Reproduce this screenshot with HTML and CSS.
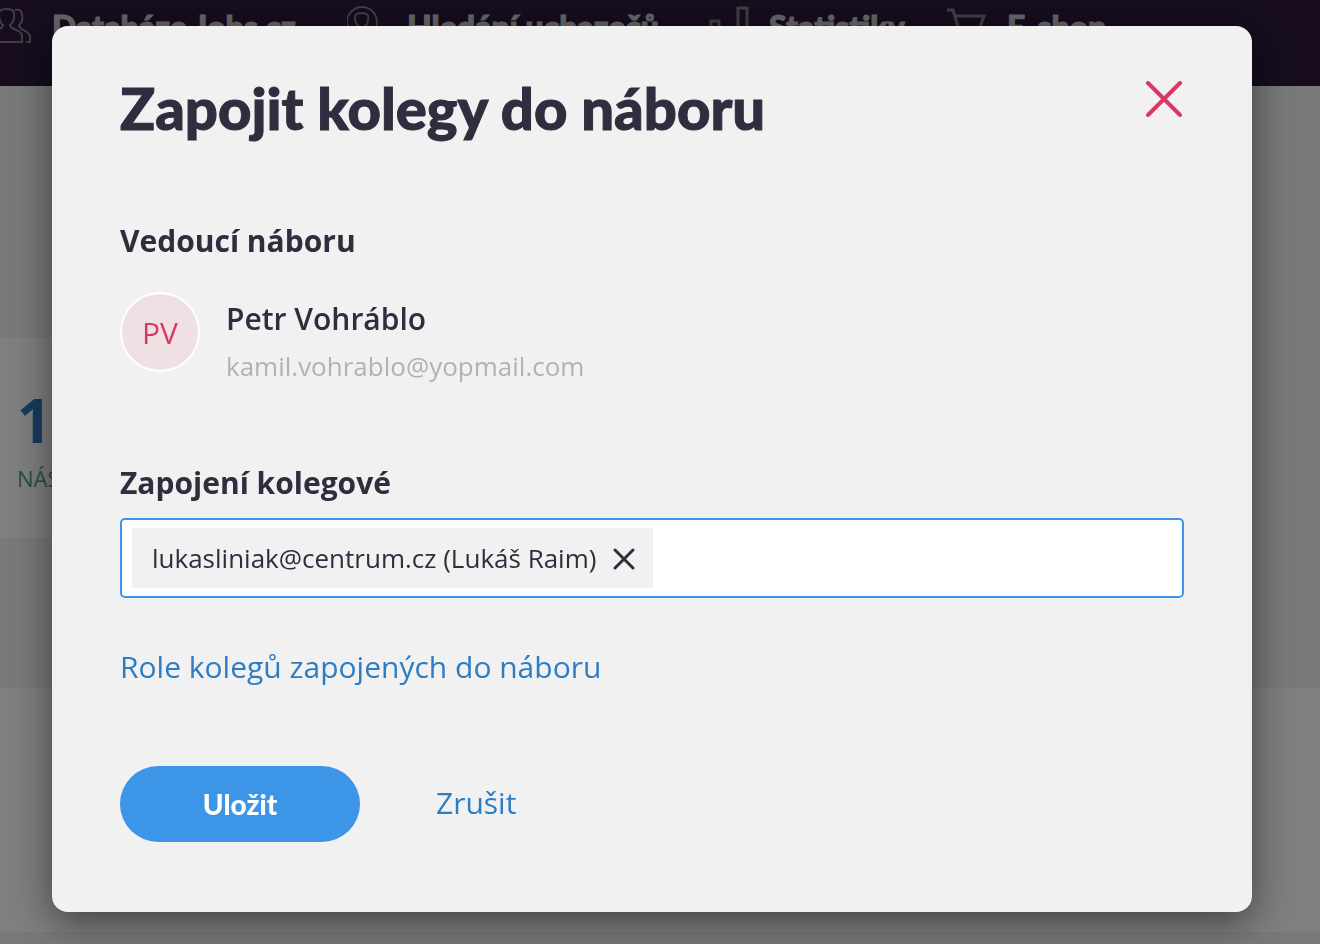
FILE: index.html
```
<!DOCTYPE html>
<html lang="cs">
<head>
    <meta charset="UTF-8">
    <meta name="viewport" content="width=device-width, initial-scale=1.0">
    <title>Zapojit kolegy do náboru</title>
    <link rel="stylesheet" href="styles.css">
</head>
<body>
    <header class="topbar">
        <nav class="nav">
            <a href="#" class="nav-item">
                <svg class="nav-icon" viewBox="0 0 40 40">
                    <path d="M0 36h30v-6c0-7-11-5-12-11 5-4 4-8 4-12-1-4-4-4-8-4s-7 1-7 5c0 4 0 8 4 11 0 5-10 4-10 10z"/>
                    <path d="M23 4c4-1 7 0 7 5 1 4 1 7-3 10 0 6 11 5 11 12v5h-4"/>
                </svg>
                <span>Databáze Jobs.cz</span>
            </a>
            <a href="#" class="nav-item">
                <svg class="nav-icon" viewBox="0 0 40 40">
                    <circle cx="15" cy="16" r="15"/>
                    <path d="M12 24v-4c-5-3-5-11-2-12 5-2 13-1 11 5 0 4-1 6-3 7v4"/>
                </svg>
                <span>Hledání uchazečů</span>
            </a>
            <a href="#" class="nav-item">
                <svg class="nav-icon nav-icon-bold" viewBox="0 0 40 40">
                    <path d="M2 36V15h8v21M15 36V22h8v14M29 36V2h9v34"/>
                </svg>
                <span>Statistiky</span>
            </a>
            <a href="#" class="nav-item">
                <svg class="nav-icon nav-icon-bold" viewBox="0 0 40 40">
                    <path d="M0 4h6l7 23h18l6-17H8"/>
                    <circle cx="15" cy="34" r="2"/>
                    <circle cx="30" cy="34" r="2"/>
                </svg>
                <span>E-shop</span>
            </a>
        </nav>
    </header>

    <main class="page">
        <section class="stats">
            <strong class="stats-count">1</strong>
            <span class="stats-label">NÁSTUP</span>
        </section>
        <section class="listing"></section>
    </main>

    <div class="overlay">
        <div class="modal" role="dialog" aria-modal="true" aria-labelledby="modalTitle">
            <div class="modal-header">
                <h1 id="modalTitle">Zapojit kolegy do náboru</h1>
                <button type="button" class="close" aria-label="Zavřít">
                    <svg viewBox="0 0 36 36"><path d="M2 2l32 32M34 2L2 34"/></svg>
                </button>
            </div>

            <h2>Vedoucí náboru</h2>
            <div class="person">
                <div class="avatar">PV</div>
                <div>
                    <p class="person-name">Petr Vohráblo</p>
                    <p class="person-email">kamil.vohrablo@yopmail.com</p>
                </div>
            </div>

            <form>
                <label for="colleagues">Zapojení kolegové</label>
                <div class="tag-field">
                    <span class="tag">
                        lukasliniak@centrum.cz (Lukáš Raim)
                        <button type="button" class="tag-remove" aria-label="Odebrat">
                            <svg viewBox="0 0 22 22"><path d="M2 2l18 18M20 2L2 20"/></svg>
                        </button>
                    </span>
                    <input type="text" id="colleagues">
                </div>

                <a href="#" class="roles-link">Role kolegů zapojených do náboru</a>

                <div class="actions">
                    <button type="submit" class="save">Uložit</button>
                    <button type="button" class="cancel">Zrušit</button>
                </div>
            </form>
        </div>
    </div>
</body>
</html>
```
FILE: styles.css
```
:root {
    --dark: #322c3f;
    --blue: #3d95e8;
    --link: #2d7dc5;
    --pink: #d93964;
    --light: #f1f1f1;
}

* {
    box-sizing: border-box;
    margin: 0;
    padding: 0;
}

body {
    min-height: 100vh;
    display: flex;
    flex-direction: column;
    overflow: hidden;
    font-family: 'Open Sans', sans-serif;
    color: var(--dark);
    background-color: #f3f3f3;
}

button {
    border: none;
    background: none;
    font-family: inherit;
    cursor: pointer;
}

a {
    color: var(--link);
    text-decoration: none;
}

svg {
    display: block;
    fill: none;
    stroke: currentColor;
}

/* Page under the dialog */
.topbar {
    height: 86px;
    background-color: #2c193c;
    overflow: hidden;
}

.nav {
    display: grid;
    grid-template-columns: 355px 362px 238px auto;
    margin-left: -8px;
}

.nav-item {
    display: flex;
    gap: 20px;
    padding-top: 6px;
    font-family: Lato, sans-serif;
    font-size: 32px;
    font-weight: 900;
    line-height: 42px;
    color: #d0ccd2;
    -webkit-text-stroke: 1px;
    white-space: nowrap;
}

.nav-icon {
    width: 40px;
    height: 40px;
    stroke-width: 2;
    color: #857c8c;
}

.nav-icon-bold {
    stroke-width: 3;
}

.page {
    flex: 1;
    display: flex;
    flex-direction: column;
    padding: 252px 0 12px;
}

.stats {
    width: 60%;
    height: 200px;
    padding: 42px 17px;
    background-color: white;
}

.stats-count {
    display: block;
    font-size: 60px;
    line-height: 80px;
    color: #2d78bd;
}

.stats-label {
    font-size: 22px;
    line-height: 36px;
    color: #4ba878;
}

.listing {
    flex: 1;
    margin-top: 150px;
    background-color: white;
}

/* Dialog */
.overlay {
    position: fixed;
    inset: 0;
    padding: 26px 68px 32px 52px;
    background-color: rgba(0, 0, 0, 0.5);
    overflow: auto;
}

.modal {
    padding: 48px 68px 70px;
    border-radius: 16px;
    background-color: var(--light);
    box-shadow: 0 10px 40px rgba(0, 0, 0, 0.5);
}

.modal-header {
    display: flex;
    justify-content: space-between;
    align-items: flex-start;
    margin-bottom: 79px;
}

h1 {
    font-family: Lato, sans-serif;
    font-size: 58px;
    font-weight: 900;
    line-height: 68px;
    -webkit-text-stroke: 1px;
}

.close {
    margin-top: 7px;
    padding: 0 2px;
    color: var(--pink);
}

.close svg {
    width: 36px;
    height: 36px;
    stroke-width: 4;
    stroke-linecap: round;
}

h2,
label {
    display: block;
    font-size: 30px;
    font-weight: 700;
    line-height: 40px;
}

.person {
    display: flex;
    gap: 26px;
    margin: 31px 0 73px;
}

.avatar {
    width: 80px;
    height: 80px;
    border: 2px solid white;
    border-radius: 50%;
    background-color: #efe0e3;
    color: var(--pink);
    font-size: 30px;
    line-height: 78px;
    text-align: center;
}

.person-name {
    padding-top: 4px;
    font-size: 30px;
    font-weight: 600;
    line-height: 46px;
}

.person-email {
    font-size: 26px;
    line-height: 48px;
    color: #b2b2b2;
}

.tag-field {
    display: flex;
    margin: 15px 0 46px;
    padding: 8px 10px;
    border: 2px solid var(--blue);
    border-radius: 5px;
    background-color: white;
}

.tag {
    display: flex;
    align-items: center;
    gap: 17px;
    padding: 0 18px 0 20px;
    background-color: var(--light);
    font-size: 26px;
    line-height: 60px;
    white-space: nowrap;
}

.tag-remove {
    padding-top: 2px;
    color: var(--dark);
}

.tag-remove svg {
    width: 22px;
    height: 22px;
    stroke-width: 3;
    stroke-linecap: round;
}

.tag-field input {
    flex: 1;
    min-width: 0;
    border: none;
    outline: none;
    background: none;
    font-family: inherit;
    font-size: 26px;
}

.roles-link {
    display: inline-block;
    font-size: 30px;
    line-height: 46px;
}

.actions {
    display: flex;
    align-items: center;
    gap: 76px;
    margin-top: 76px;
}

.save {
    width: 240px;
    height: 76px;
    border-radius: 38px;
    background-color: var(--blue);
    color: white;
    font-family: Lato, sans-serif;
    font-size: 28px;
    font-weight: 900;
}

.cancel {
    padding-bottom: 4px;
    color: var(--link);
    font-size: 30px;
}
```
